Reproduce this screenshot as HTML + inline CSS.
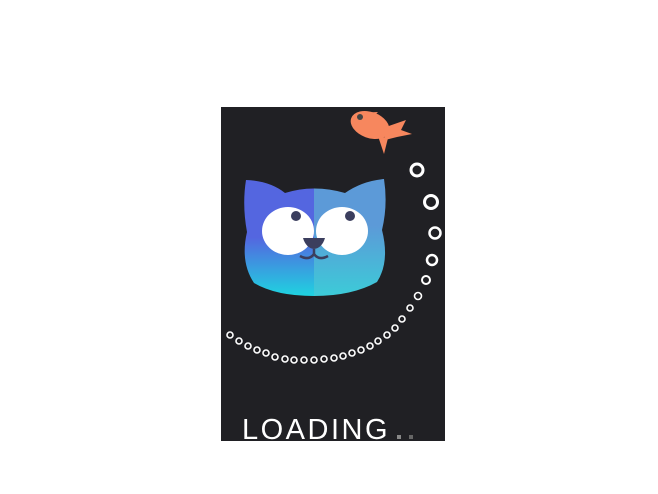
<!DOCTYPE html>
<html><head><style>
body{margin:0;background:#fff;width:658px;height:494px;overflow:hidden;position:relative;font-family:"Liberation Sans",sans-serif}
#p{position:absolute;left:221px;top:107px;width:224px;height:334px;background:#202024;overflow:hidden}
#t{position:absolute;left:242px;top:415px;font-size:29px;color:#fff;letter-spacing:2.5px;line-height:30px}
</style></head><body>
<div id="p"></div>
<svg width="658" height="494" style="position:absolute;left:0;top:0">
<defs>
<linearGradient id="gl" x1="0" y1="0" x2="0" y2="1"><stop offset="0.5" stop-color="#5466e0"/><stop offset="1" stop-color="#1fd3e0"/></linearGradient>
<linearGradient id="gr" x1="0" y1="0" x2="0" y2="1"><stop offset="0.4" stop-color="#5c9ad8"/><stop offset="1" stop-color="#3ccbd8"/></linearGradient>
<clipPath id="cl"><rect x="240" y="170" width="74" height="140"/></clipPath>
<clipPath id="cr"><rect x="314" y="170" width="80" height="140"/></clipPath>
</defs>
<path d="M246 180 Q270 181 285 193 Q314 184 345 193 Q362 181 384 179 Q388 205 382 230 Q390 262 377 282 Q352 296 314 296 Q276 296 254 283 Q240 262 247 232 Q242 205 246 180 Z" fill="url(#gl)" clip-path="url(#cl)"/>
<path d="M246 180 Q270 181 285 193 Q314 184 345 193 Q362 181 384 179 Q388 205 382 230 Q390 262 377 282 Q352 296 314 296 Q276 296 254 283 Q240 262 247 232 Q242 205 246 180 Z" fill="url(#gr)" clip-path="url(#cr)"/>
<ellipse cx="288" cy="231" rx="26" ry="24" fill="#fff"/>
<ellipse cx="342" cy="231" rx="26" ry="24" fill="#fff"/>
<circle cx="296" cy="216" r="5" fill="#3b3e5e"/>
<circle cx="350" cy="216" r="5" fill="#3b3e5e"/>
<path d="M303 238 L325 238 Q322 248 314 249 Q306 248 303 238Z" fill="#3b3e5e"/>
<path d="M314 249 L314 254 Q309 261 300 256 M314 254 Q319 261 328 256" stroke="#3b3e5e" stroke-width="2.5" fill="none"/>
<g fill="#f7875e">
<ellipse cx="370" cy="125" rx="20" ry="13" transform="rotate(20 370 125)"/>
<path d="M383 128 L406 120 L401 130 L412 134 L397 137 L385 140Z"/>
<path d="M358 113 L378 112 L370 120Z"/>
<path d="M378 136 L384 154 L388 138Z"/>
</g>
<circle cx="360" cy="117" r="3" fill="#444"/>
<g fill="none" stroke="#fff">
<circle cx="417" cy="170" r="6" stroke-width="3"/>
<circle cx="431" cy="202" r="6.5" stroke-width="3"/>
<circle cx="435" cy="233" r="5.5" stroke-width="2.5"/>
<circle cx="432" cy="260" r="5" stroke-width="2.5"/>
<circle cx="426" cy="280" r="4" stroke-width="2"/>
<g stroke-width="1.6">
<circle cx="418" cy="296" r="3.5"/><circle cx="410" cy="308" r="3"/><circle cx="402" cy="319" r="3"/><circle cx="395" cy="328" r="3"/><circle cx="387" cy="335" r="3"/><circle cx="378" cy="341" r="3"/><circle cx="370" cy="346" r="3"/><circle cx="361" cy="350" r="3"/><circle cx="352" cy="353" r="3"/><circle cx="343" cy="356" r="3"/><circle cx="334" cy="358" r="3"/><circle cx="324" cy="359" r="3"/><circle cx="314" cy="360" r="3"/><circle cx="304" cy="360" r="3"/><circle cx="294" cy="360" r="3"/><circle cx="285" cy="359" r="3"/><circle cx="275" cy="357" r="3"/><circle cx="266" cy="353" r="3"/><circle cx="257" cy="350" r="3"/><circle cx="248" cy="346" r="3"/><circle cx="239" cy="341" r="3"/><circle cx="230" cy="335" r="3"/>
</g></g>
<rect x="397" y="435" width="4" height="4" fill="#888"/>
<rect x="409" y="435" width="4" height="4" fill="#666"/>
</svg>
<div id="t">LOADING</div>
</body></html>
